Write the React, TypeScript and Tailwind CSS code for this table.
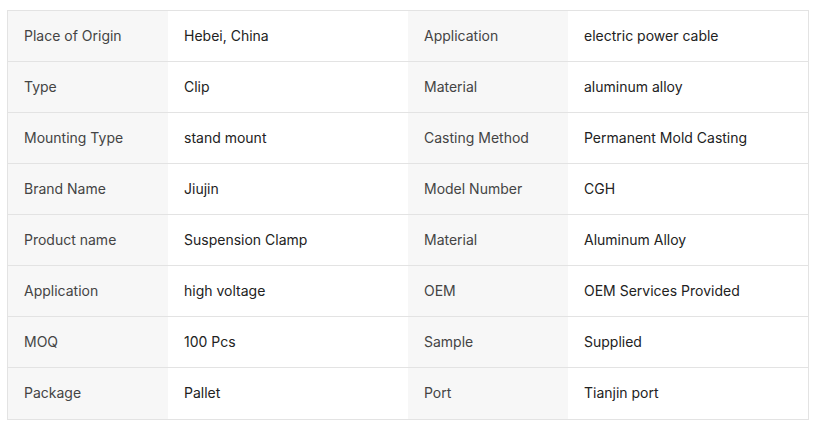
const rows: [string, string, string, string][] = [
  ['Place of Origin', 'Hebei, China', 'Application', 'electric power cable'],
  ['Type', 'Clip', 'Material', 'aluminum alloy'],
  ['Mounting Type', 'stand mount', 'Casting Method', 'Permanent Mold Casting'],
  ['Brand Name', 'Jiujin', 'Model Number', 'CGH'],
  ['Product name', 'Suspension Clamp', 'Material', 'Aluminum Alloy'],
  ['Application', 'high voltage', 'OEM', 'OEM Services Provided'],
  ['MOQ', '100 Pcs', 'Sample', 'Supplied'],
  ['Package', 'Pallet', 'Port', 'Tianjin port'],
];

export default function App() {
  return (
    <div className="bg-white w-[816px] h-[428px] pt-[10px] pl-[7px]" style={{ fontFamily: 'Inter, "Liberation Sans", sans-serif' }}>
      <div className="w-[802px] border border-[#e3e3e3]">
        {rows.map((r, i) => (
          <div
            key={i}
            className={`grid grid-cols-[160px_240px_160px_240px] h-[51px] text-[14px] ${i < rows.length - 1 ? 'border-b border-[#e3e3e3]' : 'h-[50px]'}`}
          >
            <div className="bg-[#f7f7f7] px-4 pb-[2px] flex items-center text-[#444444]">{r[0]}</div>
            <div className="px-4 pb-[2px] flex items-center text-[#222222]">{r[1]}</div>
            <div className="bg-[#f7f7f7] px-4 pb-[2px] flex items-center text-[#444444]">{r[2]}</div>
            <div className="px-4 pb-[2px] flex items-center text-[#222222]">{r[3]}</div>
          </div>
        ))}
      </div>
    </div>
  );
}
